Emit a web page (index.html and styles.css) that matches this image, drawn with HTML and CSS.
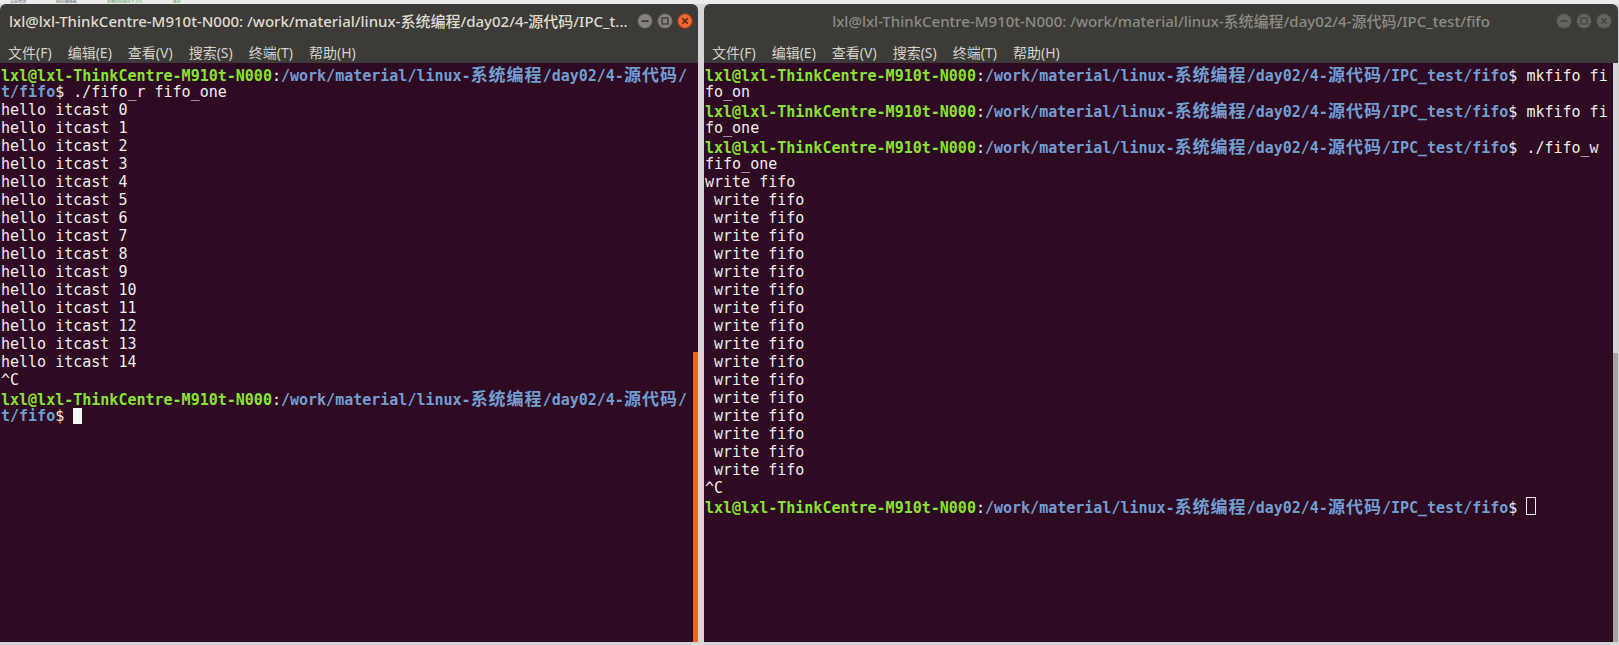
FILE: index.html
```html
<!DOCTYPE html>
<html lang="zh-CN">
<head>
    <meta charset="UTF-8">
    <title>Terminal - fifo</title>
    <link rel="stylesheet" href="styles.css">
</head>
<body>
    <div class="desk">
        <div class="backdrop">
            <span class="bd-dark">文章管理</span>
            <span class="bd-dark">MSG编辑器</span>
            <span class="bd-green">本地自动保存于上午</span>
            <span class="bd-green">保存</span>
        </div>

        <div class="windows">
            <!-- reader window (focused) -->
            <div class="win win-left">
                <div class="titlebar">
                    <div class="title">lxl@lxl-ThinkCentre-M910t-N000: /work/material/linux-系统编程/day02/4-源代码/IPC_t...</div>
                    <div class="buttons">
                        <svg class="btn" width="16" height="16" viewBox="0 0 16 16"><circle cx="8" cy="8" r="7.5" fill="#6f6d67"/><circle cx="8" cy="8" r="6.5" fill="#86847d"/><rect x="4.5" y="7.2" width="7" height="1.8" fill="#3c3b37"/></svg>
                        <svg class="btn" width="16" height="16" viewBox="0 0 16 16"><circle cx="8" cy="8" r="7.5" fill="#6f6d67"/><circle cx="8" cy="8" r="6.5" fill="#86847d"/><rect x="5" y="5" width="6" height="6" fill="none" stroke="#3c3b37" stroke-width="1.4"/></svg>
                        <svg class="btn" width="16" height="16" viewBox="0 0 16 16"><circle cx="8" cy="8" r="7.5" fill="#c9461b"/><circle cx="8" cy="8" r="6.5" fill="#f0682f"/><path d="M5.3 5.3 L10.7 10.7 M10.7 5.3 L5.3 10.7" stroke="#5a2410" stroke-width="1.6"/></svg>
                    </div>
                </div>
                <div class="menubar">
                    <span>文件(F)</span><span>编辑(E)</span><span>查看(V)</span><span>搜索(S)</span><span>终端(T)</span><span>帮助(H)</span>
                </div>
                <div class="body">
                    <div class="screen">
                        <div class="ln"><span class="u">lxl@lxl-ThinkCentre-M910t-N000</span>:<span class="p">/work/material/linux-<span class="c">系统编程</span>/day02/4-<span class="c">源代码</span>/</span></div>
                        <div class="ln"><span class="p">t/fifo</span>$ ./fifo_r fifo_one</div>
                        <div class="ln">hello itcast 0</div>
                        <div class="ln">hello itcast 1</div>
                        <div class="ln">hello itcast 2</div>
                        <div class="ln">hello itcast 3</div>
                        <div class="ln">hello itcast 4</div>
                        <div class="ln">hello itcast 5</div>
                        <div class="ln">hello itcast 6</div>
                        <div class="ln">hello itcast 7</div>
                        <div class="ln">hello itcast 8</div>
                        <div class="ln">hello itcast 9</div>
                        <div class="ln">hello itcast 10</div>
                        <div class="ln">hello itcast 11</div>
                        <div class="ln">hello itcast 12</div>
                        <div class="ln">hello itcast 13</div>
                        <div class="ln">hello itcast 14</div>
                        <div class="ln">^C</div>
                        <div class="ln"><span class="u">lxl@lxl-ThinkCentre-M910t-N000</span>:<span class="p">/work/material/linux-<span class="c">系统编程</span>/day02/4-<span class="c">源代码</span>/</span></div>
                        <div class="ln"><span class="p">t/fifo</span>$ <span class="cursor"></span></div>
                    </div>
                    <div class="track track-left"><div class="thumb thumb-active"></div></div>
                </div>
            </div>

            <!-- writer window (unfocused) -->
            <div class="win win-right">
                <div class="titlebar titlebar-center">
                    <div></div>
                    <div class="title title-dim">lxl@lxl-ThinkCentre-M910t-N000: /work/material/linux-系统编程/day02/4-源代码/IPC_test/fifo</div>
                    <div class="buttons buttons-dim">
                        <svg class="btn" width="16" height="16" viewBox="0 0 16 16"><circle cx="8" cy="8" r="7.5" fill="#5a5853"/><circle cx="8" cy="8" r="6.5" fill="#66645e"/><rect x="4.5" y="7.2" width="7" height="1.8" fill="#45443f"/></svg>
                        <svg class="btn" width="16" height="16" viewBox="0 0 16 16"><circle cx="8" cy="8" r="7.5" fill="#5a5853"/><circle cx="8" cy="8" r="6.5" fill="#66645e"/><rect x="5" y="5" width="6" height="6" fill="none" stroke="#45443f" stroke-width="1.4"/></svg>
                        <svg class="btn" width="16" height="16" viewBox="0 0 16 16"><circle cx="8" cy="8" r="7.5" fill="#5a5853"/><circle cx="8" cy="8" r="6.5" fill="#66645e"/><path d="M5.3 5.3 L10.7 10.7 M10.7 5.3 L5.3 10.7" stroke="#45443f" stroke-width="1.6"/></svg>
                    </div>
                </div>
                <div class="menubar">
                    <span>文件(F)</span><span>编辑(E)</span><span>查看(V)</span><span>搜索(S)</span><span>终端(T)</span><span>帮助(H)</span>
                </div>
                <div class="body">
                    <div class="screen">
                        <div class="ln"><span class="u">lxl@lxl-ThinkCentre-M910t-N000</span>:<span class="p">/work/material/linux-<span class="c">系统编程</span>/day02/4-<span class="c">源代码</span>/IPC_test/fifo</span>$ mkfifo fi</div>
                        <div class="ln">fo_on</div>
                        <div class="ln"><span class="u">lxl@lxl-ThinkCentre-M910t-N000</span>:<span class="p">/work/material/linux-<span class="c">系统编程</span>/day02/4-<span class="c">源代码</span>/IPC_test/fifo</span>$ mkfifo fi</div>
                        <div class="ln">fo_one</div>
                        <div class="ln"><span class="u">lxl@lxl-ThinkCentre-M910t-N000</span>:<span class="p">/work/material/linux-<span class="c">系统编程</span>/day02/4-<span class="c">源代码</span>/IPC_test/fifo</span>$ ./fifo_w</div>
                        <div class="ln">fifo_one</div>
                        <div class="ln">write fifo</div>
                        <div class="ln"> write fifo</div>
                        <div class="ln"> write fifo</div>
                        <div class="ln"> write fifo</div>
                        <div class="ln"> write fifo</div>
                        <div class="ln"> write fifo</div>
                        <div class="ln"> write fifo</div>
                        <div class="ln"> write fifo</div>
                        <div class="ln"> write fifo</div>
                        <div class="ln"> write fifo</div>
                        <div class="ln"> write fifo</div>
                        <div class="ln"> write fifo</div>
                        <div class="ln"> write fifo</div>
                        <div class="ln"> write fifo</div>
                        <div class="ln"> write fifo</div>
                        <div class="ln"> write fifo</div>
                        <div class="ln"> write fifo</div>
                        <div class="ln">^C</div>
                        <div class="ln"><span class="u">lxl@lxl-ThinkCentre-M910t-N000</span>:<span class="p">/work/material/linux-<span class="c">系统编程</span>/day02/4-<span class="c">源代码</span>/IPC_test/fifo</span>$ <span class="cursor cursor-hollow"></span></div>
                    </div>
                    <div class="track track-right"><div class="thumb thumb-idle"></div></div>
                </div>
            </div>
        </div>
    </div>
</body>
</html>
```

FILE: styles.css
```css
body {
    margin: 0;
    background-color: #d6d6d6;
    font-family: "Noto Sans", "Noto Sans CJK SC", sans-serif;
    overflow: hidden;
}
.desk {
    width: 1619px;
    height: 645px;
    display: flex;
    flex-direction: column;
}
.backdrop {
    height: 4px;
    overflow: hidden;
    background-color: #ebebeb;
    display: flex;
    align-items: flex-start;
    gap: 30px;
    padding-left: 10px;
    font-size: 4px;
    line-height: 4px;
}
.bd-dark {
    color: #666;
}
.bd-green {
    color: #3c9a3c;
}
.windows {
    display: flex;
    gap: 6px;
    height: 638px;
}
.win {
    display: flex;
    flex-direction: column;
    border-radius: 6px 6px 0 0;
    overflow: hidden;
}
.win-left {
    width: 698px;
}
.win-right {
    width: 914px;
}
.titlebar {
    height: 33px;
    background-color: #3c3b37;
    display: flex;
    align-items: center;
}
.titlebar-center {
    display: grid;
    grid-template-columns: 1fr auto 1fr;
}
.title {
    flex: 1;
    padding-left: 9px;
    color: #dfdbd2;
    font-size: 15px;
    font-weight: 500;
    white-space: nowrap;
    overflow: hidden;
}
.title-dim {
    padding-left: 0;
    color: #8d8b85;
}
.buttons {
    display: flex;
    gap: 4px;
    padding-right: 5px;
    justify-self: end;
}
.buttons-dim {
    padding-right: 6px;
}
.btn {
    display: block;
}
.menubar {
    height: 26px;
    box-sizing: border-box;
    padding: 3px 0 0 8px;
    background-color: #3c3b37;
    display: flex;
    align-items: center;
    gap: 16px;
    color: #d6d2c9;
    font-size: 14px;
}
.body {
    flex: 1;
    display: flex;
}
.screen {
    flex: 1;
    background-color: #2f0a23;
    padding: 2px 0 0 1px;
    font-family: "DejaVu Sans Mono", monospace;
    font-size: 15px;
    color: #eeeeec;
}
.ln {
    height: 18px;
    line-height: 18px;
    white-space: pre;
}
.u {
    color: #8ae234;
    font-weight: bold;
}
.p {
    color: #729fcf;
    font-weight: bold;
}
.c {
    font-family: "Noto Sans CJK SC", sans-serif;
    font-size: 17px;
    letter-spacing: 1px;
}
.cursor {
    display: inline-block;
    width: 9px;
    height: 16px;
    vertical-align: top;
    margin-top: 1px;
    background-color: #f5f5f5;
}
.cursor-hollow {
    box-sizing: border-box;
    height: 18px;
    width: 10px;
    margin-top: 0;
    background-color: transparent;
    border: 1px solid #f0f0f0;
}
.track {
    display: flex;
    flex-direction: column;
}
.track-left {
    width: 6px;
    background-color: #2f0a23;
}
.track-right {
    width: 5px;
}
.thumb {
    margin-top: auto;
    height: 290px;
}
.thumb-active {
    background-color: #e8651f;
    border-left: 1px solid #1c0615;
}
.thumb-idle {
    height: 289px;
    background-color: #a8a6a2;
}
```
